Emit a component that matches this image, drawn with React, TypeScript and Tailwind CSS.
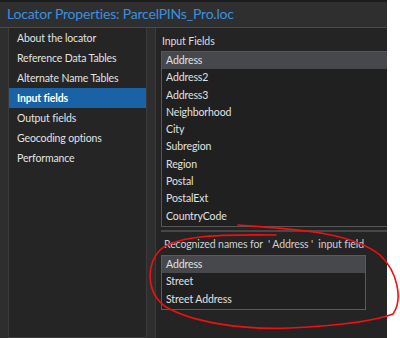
import React from "react";

const navItems = [
  "About the locator",
  "Reference Data Tables",
  "Alternate Name Tables",
  "Input fields",
  "Output fields",
  "Geocoding options",
  "Performance",
];

const inputFields = [
  "Address",
  "Address2",
  "Address3",
  "Neighborhood",
  "City",
  "Subregion",
  "Region",
  "Postal",
  "PostalExt",
  "CountryCode",
];

const recognized = ["Address", "Street", "Street Address"];

export default function App() {
  return (
    <div className="relative w-[400px] h-[338px] overflow-hidden bg-white font-['Lato',sans-serif]">
      <div className="flex flex-col w-[387px] h-full bg-[#2e2e2e]">
        {/* title */}
        <div className="h-[2px] bg-[#1c1c1c]" />
        <div className="h-[25px] pl-[7px] leading-[24px] text-[14px] tracking-[-0.2px] text-[#3a8fe0] bg-[#2f2f2f] whitespace-nowrap">
          Locator Properties: ParcelPINs_Pro.loc
        </div>
        <div className="h-[1px] bg-[#4a4a4a]" />

        <div className="flex flex-1 gap-[8px] pl-[8px]">
          {/* left nav */}
          <div className="w-[139px] border border-t-0 border-[#3b3b3b] bg-[#252525]">
            {navItems.map((n, i) => (
              <div
                key={n}
                className={
                  "h-[20px] pl-[8px] leading-[20px] text-[10.5px] tracking-[-0.12px] whitespace-nowrap " +
                  (i === 3 ? "bg-[#1a62a6] text-white font-bold" : "text-[#e2e2e2]")
                }
              >
                {n}
              </div>
            ))}
          </div>

          {/* right side */}
          <div className="flex-1 border-l border-[#3b3b3b] bg-[#242424] pl-[5px]">
            <div className="h-[23px] pl-[1px] pt-[4px] leading-[18px] text-[10.5px] tracking-[-0.1px] text-[#dcdcdc]">Input Fields</div>
            <div className="border border-r-0 border-[#565656] bg-[#202020] pb-[1px]">
              {inputFields.map((f, i) => (
                <div
                  key={f}
                  className={
                    "h-[17.3px] pl-[4px] leading-[17.3px] text-[10.5px] tracking-[-0.1px] text-[#e0e0e0] " +
                    (i === 0 ? "bg-[#46484c]" : "")
                  }
                >
                  {f}
                </div>
              ))}
            </div>
            <div className="mt-[3px] h-[2px] bg-[#474747]" />
            <div className="h-[23px] pl-[3px] pt-[3px] leading-[18px] text-[10.5px] tracking-[-0.1px] text-[#cfcfcf] whitespace-nowrap">
              Recognized names for &nbsp;' Address '&nbsp; input field
            </div>
            <div className="w-[205px] border border-[#5a5a5a] bg-[#202020] pb-[1px]">
              {recognized.map((f, i) => (
                <div
                  key={f}
                  className={
                    "h-[17.3px] pl-[4px] leading-[17.3px] text-[10.5px] tracking-[-0.1px] text-[#e0e0e0] " +
                    (i === 0 ? "bg-[#46484c]" : "")
                  }
                >
                  {f}
                </div>
              ))}
            </div>
          </div>
        </div>
      </div>

      {/* hand-drawn annotation */}
      <svg className="absolute left-0 top-0 pointer-events-none" width="400" height="338" viewBox="0 0 400 338">
        <path
          d="M238 225 C 290 229, 350 231, 380 255 C 398 272, 403 300, 393 314 C 372 322, 330 326, 290 328 C 240 330, 192 322, 166 307 C 146 293, 146 265, 160 250 C 174 237, 210 234, 276 235"
          fill="none"
          stroke="#f01010"
          strokeWidth="1.6"
          strokeLinecap="round"
        />
      </svg>
    </div>
  );
}
